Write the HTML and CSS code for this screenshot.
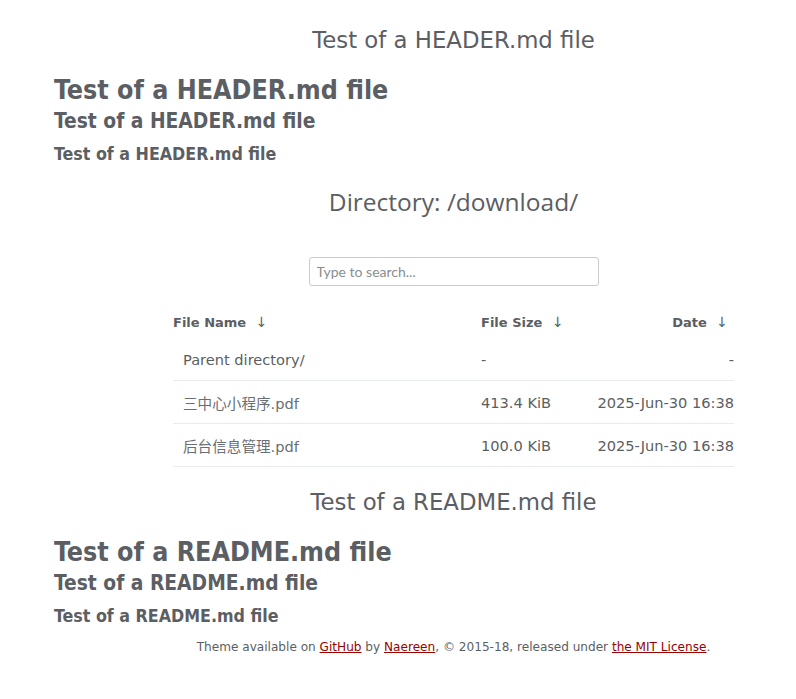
FILE: index.html
```html
<!DOCTYPE html>
<html>
<head>
<meta charset="utf-8">
<link rel="stylesheet" href="styles.css">
</head>
<body>
<div class="page">
  <section class="md">
    <div class="md-title">Test of a HEADER.md file</div>
    <h1 class="h1">Test of a HEADER.md file</h1>
    <h2 class="h2">Test of a HEADER.md file</h2>
    <h3 class="h3">Test of a HEADER.md file</h3>
  </section>

  <div class="main">
    <h1 class="dir">Directory: /download/</h1>
    <div class="search-row">
      <input class="search" type="text" placeholder="Type to search...">
    </div>
    <table class="list">
      <thead>
        <tr>
          <th class="c-name">File Name <span class="arrow">↓</span></th>
          <th class="c-size">File Size <span class="arrow">↓</span></th>
          <th class="c-date">Date <span class="arrow">↓</span></th>
        </tr>
      </thead>
      <tbody>
        <tr>
          <td class="c-name"><a href="#">Parent directory/</a></td>
          <td class="c-size">-</td>
          <td class="c-date">-</td>
        </tr>
        <tr>
          <td class="c-name"><a class="file" href="#">三中心小程序.pdf</a></td>
          <td class="c-size">413.4 KiB</td>
          <td class="c-date">2025-Jun-30 16:38</td>
        </tr>
        <tr>
          <td class="c-name"><a class="file" href="#">后台信息管理.pdf</a></td>
          <td class="c-size">100.0 KiB</td>
          <td class="c-date">2025-Jun-30 16:38</td>
        </tr>
      </tbody>
    </table>
  </div>

  <section class="md readme">
    <div class="md-title">Test of a README.md file</div>
    <h1 class="h1">Test of a README.md file</h1>
    <h2 class="h2">Test of a README.md file</h2>
    <h3 class="h3">Test of a README.md file</h3>
  </section>

  <footer class="footer">
    Theme available on <a href="#">GitHub</a> by <a href="#">Naereen</a>, © 2015-18, released under <a href="#">the MIT License</a>.
  </footer>
</div>
</body>
</html>
```

FILE: styles.css
```css
html, body {
  margin: 0;
  padding: 0;
  background: #ffffff;
}
body {
  color: #5b5e63;
  font-family: "DejaVu Sans", Verdana, sans-serif;
}
.page {
  padding: 26px 0 0 54px;
}
.md {
  display: flex;
  flex-direction: column;
}
.md-title {
  margin-left: 119px;
  width: 561px;
  text-align: center;
  font-size: 22.8px;
  line-height: 28px;
}
.h1, .h2, .h3 {
  margin: 0;
  font-family: "DejaVu Sans Condensed", Tahoma, sans-serif;
  font-weight: bold;
}
.h1 {
  margin-top: 20px;
  font-size: 26.6px;
  line-height: 32px;
}
.h2 {
  font-size: 20.8px;
  line-height: 30px;
}
.h3 {
  margin-top: 3px;
  font-size: 17.7px;
  line-height: 30px;
}
.main {
  margin-left: 119px;
  width: 561px;
}
.dir {
  margin: 18px 0 0;
  font-family: "Open Sans", sans-serif;
  font-weight: normal;
  font-size: 24.5px;
  line-height: 30px;
  text-align: center;
}
.search-row {
  display: flex;
  justify-content: center;
  margin-top: 40px;
}
.search {
  box-sizing: border-box;
  width: 290px;
  height: 29px;
  border: 1px solid #cccccc;
  border-radius: 3px;
  padding: 0 7px;
  font-family: Lato, sans-serif;
  font-size: 14px;
  color: #5b5e63;
  outline: none;
}
.search::placeholder {
  color: #8a8d91;
}
.list {
  width: 561px;
  border-collapse: collapse;
  margin-top: 19px;
  font-size: 14.6px;
}
.list th {
  font-size: 13px;
  font-weight: bold;
  height: 33px;
  padding: 0;
  vertical-align: middle;
}
.list th.c-name { text-align: left; }
.list th.c-size { text-align: left; }
.list th.c-date { text-align: right; padding-right: 6px; }
.arrow {
  display: inline-block;
  margin-left: 5px;
  font-family: "DejaVu Sans", sans-serif;
  font-weight: normal;
  font-size: 14px;
  color: #5b5e63;
}
.list td {
  height: 42px;
  padding: 0;
  vertical-align: middle;
  border-bottom: 1px solid #e9ecef;
}
.list td.c-name { padding-left: 10px; width: 298px; }
.list td.c-size { width: 100px; }
.list td.c-date { text-align: right; }
.list a {
  color: #5b5e63;
  text-decoration: none;
}
.list a.file {
  font-family: "DejaVu Sans", "Noto Sans CJK SC", sans-serif;
  color: #6a6e73;
}
.readme {
  margin-top: 21px;
}
.readme .h1 {
  margin-top: 20px;
}
.footer {
  margin: 6px 0 0 119px;
  width: 561px;
  text-align: center;
  font-size: 12.1px;
  line-height: 20px;
}
.footer a {
  color: #990000;
}
```
